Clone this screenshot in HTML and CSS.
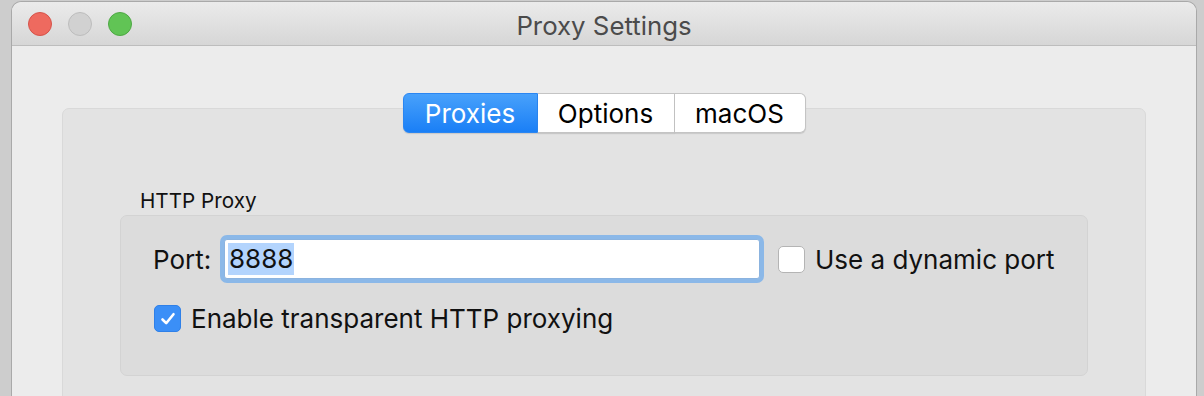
FILE: index.html
```html
<!DOCTYPE html>
<html lang="en">
<head>
    <meta charset="UTF-8">
    <title>Proxy Settings</title>
    <link rel="stylesheet" href="styles.css">
</head>
<body>

    <!-- Jendela pengaturan proxy -->
    <div class="window">
        <div class="titlebar">
            <div class="lights">
                <span class="light close"></span>
                <span class="light minimize"></span>
                <span class="light zoom"></span>
            </div>
            <div class="title">Proxy Settings</div>
        </div>

        <div class="content">
            <div class="tabs">
                <button class="tab active">Proxies</button>
                <button class="tab">Options</button>
                <button class="tab">macOS</button>
            </div>

            <div class="tab-box">
                <div class="group-label">HTTP Proxy</div>
                <div class="group">
                    <div class="row">
                        <label class="port-label" for="port">Port:</label>
                        <div class="field"><span class="selected">8888</span></div>
                        <span class="checkbox"></span>
                        <span class="check-label">Use a dynamic port</span>
                    </div>
                    <div class="row row-2">
                        <span class="checkbox checked">
                            <svg width="20" height="20" viewBox="0 0 20 20"><path d="M4.5 10.5 L8.2 14.2 L15.5 5.2" fill="none" stroke="white" stroke-width="2.6" stroke-linecap="round" stroke-linejoin="round"/></svg>
                        </span>
                        <span class="check-label">Enable transparent HTTP proxying</span>
                    </div>
                </div>
            </div>
        </div>
    </div>

</body>
</html>
```

FILE: styles.css
```css
body {
    margin: 0;
    height: 396px;
    overflow: hidden;
    background: #cdcdcd;
    font-family: Inter, "Liberation Sans", sans-serif;
    color: #111;
}
.window {
    margin: 2px 0 0 12px;
    width: 1184px;
    height: 394px;
    overflow: hidden;
    background: #ececec;
    border-radius: 9px 9px 0 0;
    box-shadow: 0 0 0 1px #a9a9a9;
}
/* Title bar */
.titlebar {
    height: 43px;
    display: flex;
    align-items: center;
    position: relative;
    border-radius: 9px 9px 0 0;
    background: linear-gradient(#ebebeb, #d6d6d6);
    border-bottom: 1px solid #bdbdbd;
}
.lights {
    display: flex;
    gap: 16px;
    padding-left: 16px;
}
.light {
    width: 22px;
    height: 22px;
    border-radius: 50%;
    border: 1px solid;
}
.close {
    background: #ee6a5f;
    border-color: #d6534a;
}
.minimize {
    background: #d1d1d1;
    border-color: #bdbdbd;
}
.zoom {
    background: #61c455;
    border-color: #4ea844;
}
.title {
    position: absolute;
    left: 0;
    right: 0;
    top: 8px;
    text-align: center;
    font-size: 25.8px;
    color: #4b4b4b;
}
/* Tabs */
.content {
    padding: 47px 50px 0;
}
.tabs {
    display: flex;
    justify-content: center;
    position: relative;
    z-index: 2;
}
.tab {
    font-family: inherit;
    font-size: 26px;
    height: 40px;
    padding: 0;
    background: #fff;
    color: #000;
    border: 1px solid #c4c4c4;
    border-left: none;
    box-shadow: 0 1px 1px rgba(0, 0, 0, 0.12);
}
.tab:nth-child(1) {
    width: 135px;
    border-radius: 6px 0 0 6px;
}
.tab:nth-child(2) {
    width: 137px;
}
.tab:nth-child(3) {
    width: 131px;
    border-radius: 0 6px 6px 0;
}
.tab.active {
    background: linear-gradient(#48a1fb, #1a7ff6);
    border: 1px solid #2a86f2;
    color: #fff;
}
.tab-box {
    margin-top: -25px;
    height: 300px;
    background: #e3e3e3;
    border: 1px solid #d9d9d9;
    border-radius: 7px;
    padding: 79px 57px 0;
}
.group-label {
    font-size: 20.7px;
    padding-left: 20px;
    height: 27px;
}
.group {
    height: 161px;
    background: #dcdcdc;
    border: 1px solid #d3d3d3;
    border-radius: 7px;
    box-sizing: border-box;
    padding: 23px 0 0 32px;
}
.row {
    display: flex;
    align-items: center;
    font-size: 26px;
}
.port-label {
    width: 71px;
}
.field {
    width: 531px;
    height: 38px;
    background: #fff;
    border: 1px solid #8bb3df;
    box-shadow: 0 0 0 4px #8bb8e8;
    border-radius: 3px;
    display: flex;
    align-items: center;
    padding-left: 3px;
}
.selected {
    background: #b3d4fd;
    padding: 0 1px;
    line-height: 32px;
}
.checkbox {
    width: 25px;
    height: 25px;
    border: 1px solid #b4b4b4;
    border-radius: 5px;
    background: #fff;
    margin: 0 10px 0 18px;
    display: flex;
    align-items: center;
    justify-content: center;
}
.row-2 {
    margin-top: 24px;
}
.row-2 .checkbox {
    margin-left: 1px;
}
.checkbox.checked {
    background: #3b8ff7;
    border-color: #2f80e8;
}
```
